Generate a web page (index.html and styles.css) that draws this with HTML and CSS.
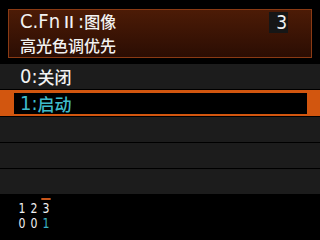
FILE: index.html
```html
<!DOCTYPE html>
<html>
<head>
<meta charset="utf-8">
<link rel="stylesheet" href="styles.css">
</head>
<body>
<div class="screen">
  <div class="header">
    <div class="hline">
      <span class="title"><span class="lat">C.Fn</span><span class="roman">Ⅱ</span><span class="lat">:</span>图像</span>
      <span class="page">3</span>
    </div>
    <div class="hline sub">高光色调优先</div>
  </div>
  <div class="rows">
    <div class="row"><span class="lat">0:</span>关闭</div>
    <div class="row sel"><div class="selin"><span class="lat">1:</span>启动</div></div>
    <div class="row"></div>
    <div class="row"></div>
    <div class="row"></div>
  </div>
  <div class="status">
    <div class="sline">
      <span class="d">1</span>
      <span class="d">2</span>
      <span class="d cur">3</span>
    </div>
    <div class="sline">
      <span class="d">0</span>
      <span class="d">0</span>
      <span class="d val">1</span>
    </div>
  </div>
</div>
</body>
</html>
```
FILE: styles.css
```css
html, body {
  margin: 0;
  padding: 0;
  background: #000;
}
.screen {
  width: 320px;
  height: 240px;
  overflow: hidden;
  background: #000;
  font-family: "Liberation Sans Narrow", "DejaVu Sans Condensed", "Noto Sans CJK SC", sans-serif;
  color: #f2f2f2;
}
.header {
  margin: 9px 8px 0 8px;
  height: 47px;
  border: 1px solid #8a3a14;
  background: linear-gradient(#4c1b06, #2b0d03);
  padding: 0 0 0 11px;
  display: flex;
  flex-direction: column;
}
.hline {
  display: flex;
  justify-content: space-between;
  align-items: center;
  height: 23.5px;
  font-family: "Noto Sans CJK SC", sans-serif;
  font-weight: 500;
  font-size: 16px;
  line-height: 23.5px;
}
.lat {
  font-family: "Liberation Sans Narrow", "DejaVu Sans Condensed", sans-serif;
  font-weight: 400;
  font-size: 20px;
}
.roman {
  font-family: "Noto Sans CJK SC", sans-serif;
  font-size: 16px;
  margin: 0 1px;
}
.page {
  margin: 1px 23px 0 0;
  width: 19px;
  height: 21px;
  background: #161616;
  text-align: right;
  font-family: "Liberation Sans Narrow", "DejaVu Sans Condensed", sans-serif;
  font-weight: 400;
  font-size: 19px;
  line-height: 21px;
  padding-right: 1px;
  box-sizing: border-box;
}
.rows {
  margin-top: 6px;
  display: flex;
  flex-direction: column;
  gap: 1px;
}
.row {
  height: 25px;
  background: #1c1c1c;
  padding-left: 20px;
  font-family: "Noto Sans CJK SC", sans-serif;
  font-weight: 500;
  font-size: 17px;
  line-height: 25px;
  display: flex;
  align-items: center;
}
.row.sel {
  background: #d2560f;
  padding: 3px 13px 2px 14px;
  box-sizing: border-box;
  height: 26px;
}
.selin {
  flex: 1;
  height: 100%;
  background: #000;
  color: #3fbccb;
  padding-left: 6px;
  display: flex;
  align-items: center;
}
.status {
  display: flex;
  flex-direction: column;
  padding: 6px 0 0 16px;
  font-family: "DejaVu Sans", sans-serif;
  font-size: 14px;
  color: #f0f0f0;
}
.sline {
  display: flex;
  height: 15px;
}
.d {
  display: block;
  width: 12px;
  height: 15px;
  line-height: 16px;
  text-align: center;
  transform: scaleX(0.78);
}
.d.cur {
  position: relative;
}
.d.cur::before {
  content: "";
  position: absolute;
  left: 0;
  right: 0;
  top: -2px;
  height: 2px;
  background: #c8561a;
}
.d.val { color: #3bb3c4; }
```
